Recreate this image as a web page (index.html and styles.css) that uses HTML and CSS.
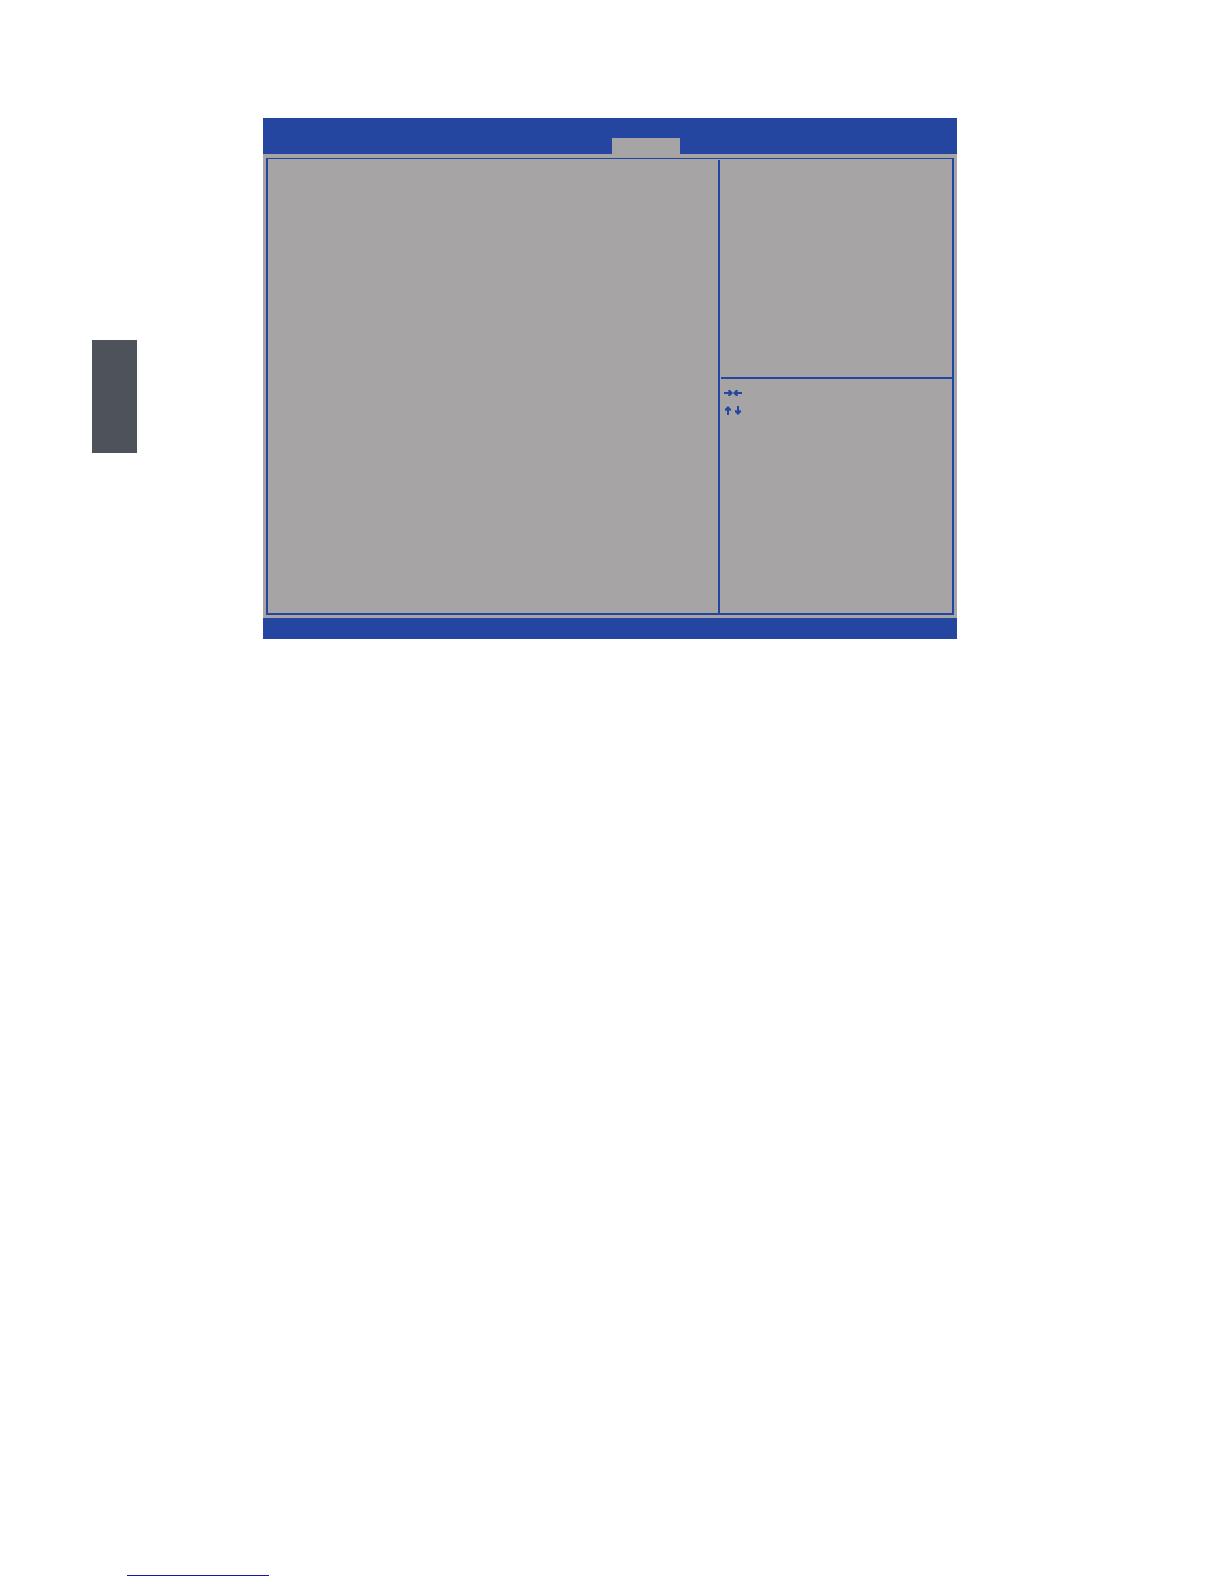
FILE: index.html
```html
<!DOCTYPE html>
<html lang="en">
<head>
  <meta charset="UTF-8" />
  <meta name="viewport" content="width=device-width, initial-scale=1.0" />
  <title>BIOS Setup</title>
  <link rel="stylesheet" href="styles.css">
</head>
<body>
  <main class="content">
    <aside class="chapter-mark"></aside>

    <section class="bios">
      <header class="bios-header">
        <div class="bios-tab"></div>
      </header>
      <div class="bios-body">
        <div class="frame">
          <div class="options"></div>
          <div class="side">
            <div class="help"></div>
            <div class="keys">
              <svg class="key-icon" width="20" height="8" viewBox="0 0 20 8" fill="none" stroke="currentColor" stroke-width="2">
                <path d="M0 4H8M10 4H18" />
                <path d="M4 1H6L9 4L6 7H4L5 4ZM14 1H12L9 4L12 7H14L13 4Z" fill="currentColor" stroke="none" />
              </svg>
              <svg class="key-icon" width="20" height="10" viewBox="0 0 20 10" fill="none" stroke="currentColor" stroke-width="2">
                <path d="M4 1V9M14 0V8" />
                <path d="M1 5V3L4 0L7 3V5L4 4ZM11 4V6L14 9L17 6V4L14 5Z" fill="currentColor" stroke="none" />
              </svg>
            </div>
          </div>
        </div>
      </div>
      <footer class="bios-footer"></footer>
    </section>
  </main>

  <footer class="page-footer">
    <div class="footer-line"></div>
  </footer>
</body>
</html>
```

FILE: styles.css
```css
* {
  box-sizing: border-box;
}

body {
  margin: 0;
  min-height: 100vh;
  display: flex;
  flex-direction: column;
  justify-content: space-between;
  font-family: "Liberation Sans", Arial, sans-serif;
  background-color: #fff;
  color: #2446a0;
}

.content {
  display: flex;
  align-items: flex-start;
  gap: 126px;
  padding: 118px 267px 0 92px;
}

.chapter-mark {
  flex: none;
  width: 45px;
  height: 113px;
  margin-top: 222px;
  background-color: #4e525b;
}

/* setup screen */
.bios {
  flex: 1;
  background-color: #a6a4a4;
}

.bios-header {
  display: flex;
  align-items: flex-end;
  height: 36px;
  padding-left: 349px;
  background-color: #2446a0;
}

.bios-tab {
  width: 68px;
  height: 16px;
  background-color: #a6a4a4;
}

.bios-body {
  padding: 4px 3px 3px;
}

.frame {
  display: flex;
  min-height: 457px;
  padding-top: 1px;
  border: 2px solid #2446a0;
  border-top-width: 1px;
}

.options {
  flex: 1;
  border-right: 2px solid #2446a0;
}

.side {
  width: 232px;
  padding-left: 1px;
}

.help {
  min-height: 219px;
  border-bottom: 2px solid #2446a0;
}

.keys {
  display: flex;
  flex-direction: column;
  gap: 9px;
  padding: 10px 3px;
}

.key-icon {
  display: block;
}

.bios-footer {
  height: 21px;
  background-color: #2446a0;
}

.page-footer {
  padding: 0 127px 8px;
}

.footer-line {
  width: 142px;
  height: 1px;
  background-color: #1616a0;
}
```
